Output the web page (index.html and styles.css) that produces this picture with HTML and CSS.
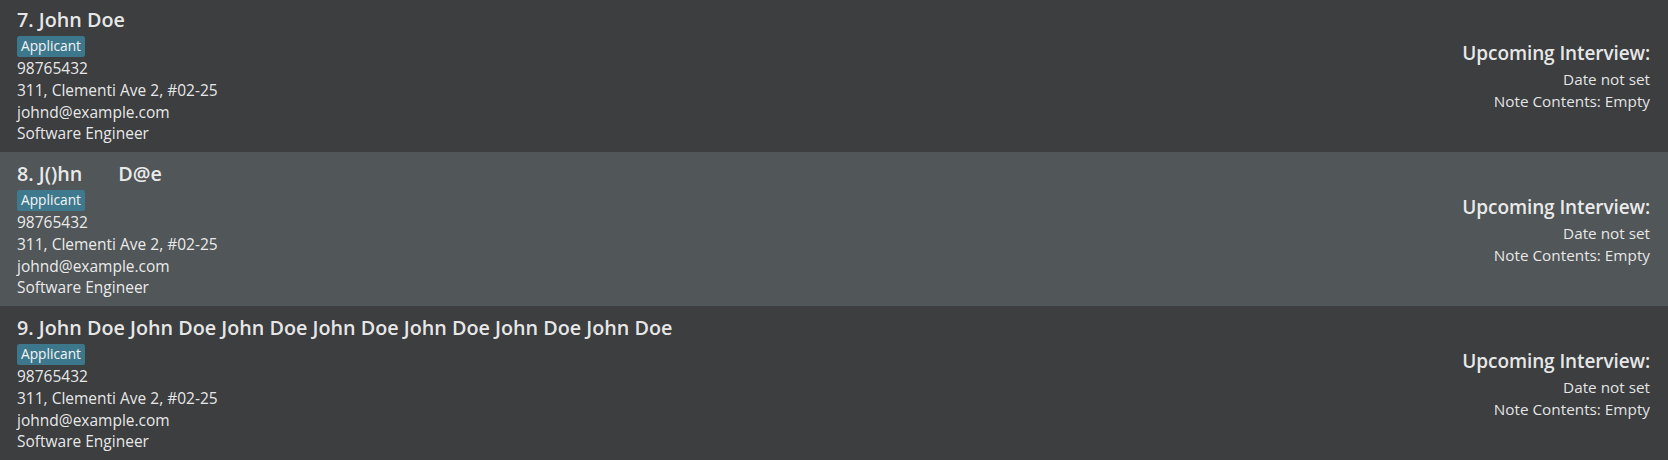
FILE: index.html
```html
<!DOCTYPE html>
<html lang="en">
<head>
<meta charset="utf-8">
<title>Applicants</title>
<link rel="stylesheet" href="styles.css">
</head>
<body>
<div class="list">
  <div class="cell even">
    <div class="info">
      <div class="name">7. John Doe</div>
      <div class="tags"><span class="tag">Applicant</span></div>
      <div class="line">98765432</div>
      <div class="line">311, Clementi Ave 2, #02-25</div>
      <div class="line">johnd@example.com</div>
      <div class="line">Software Engineer</div>
    </div>
    <div class="interview">
      <div class="heading">Upcoming Interview:</div>
      <div class="line">Date not set</div>
      <div class="line">Note Contents: Empty</div>
    </div>
  </div>
  <div class="cell odd">
    <div class="info">
      <div class="name">8. J()hn       D@e</div>
      <div class="tags"><span class="tag">Applicant</span></div>
      <div class="line">98765432</div>
      <div class="line">311, Clementi Ave 2, #02-25</div>
      <div class="line">johnd@example.com</div>
      <div class="line">Software Engineer</div>
    </div>
    <div class="interview">
      <div class="heading">Upcoming Interview:</div>
      <div class="line">Date not set</div>
      <div class="line">Note Contents: Empty</div>
    </div>
  </div>
  <div class="cell even">
    <div class="info">
      <div class="name">9. John Doe John Doe John Doe John Doe John Doe John Doe John Doe</div>
      <div class="tags"><span class="tag">Applicant</span></div>
      <div class="line">98765432</div>
      <div class="line">311, Clementi Ave 2, #02-25</div>
      <div class="line">johnd@example.com</div>
      <div class="line">Software Engineer</div>
    </div>
    <div class="interview">
      <div class="heading">Upcoming Interview:</div>
      <div class="line">Date not set</div>
      <div class="line">Note Contents: Empty</div>
    </div>
  </div>
</div>
</body>
</html>
```

FILE: styles.css
```css
html, body {
  margin: 0;
  padding: 0;
  background: #3c3e3f;
  overflow: hidden;
}

body {
  font-family: "Open Sans", "Noto Sans", "DejaVu Sans", sans-serif;
  color: rgba(255, 255, 255, 0.9);
}

.list {
  display: flex;
  flex-direction: column;
  margin-top: -2px;
}

.cell {
  display: flex;
  justify-content: space-between;
  align-items: center;
  height: 154px;
  padding: 2px 18px 0 17px;
  box-sizing: border-box;
}

.cell.even {
  background: #3c3e3f;
}

.cell.odd {
  background: #515658;
}

.info {
  display: flex;
  flex-direction: column;
  align-items: flex-start;
}

.name {
  font-size: 19.75px;
  font-weight: 600;
  line-height: 26px;
  white-space: pre;
}

.tags {
  display: flex;
  margin: 3px 0 1px 0;
}

.tag {
  display: inline-block;
  background: #3e7b91;
  opacity: 0.95;
  color: #ffffff;
  font-size: 13.75px;
  font-weight: 400;
  line-height: 18px;
  padding: 1.5px 3.5px 1.5px 4px;
  border-radius: 2.5px;
}

.line {
  font-size: 15.5px;
  line-height: 21.8px;
  white-space: nowrap;
}

.interview {
  display: flex;
  flex-direction: column;
  align-items: flex-end;
  text-align: right;
  margin-top: 1px;
}

.interview .heading {
  font-size: 19px;
  font-weight: 600;
  line-height: 26px;
  letter-spacing: -0.1px;
  margin-bottom: 3px;
}

.interview .line {
  font-size: 15.3px;
  line-height: 21.8px;
  color: rgba(255, 255, 255, 0.88);
}
```
